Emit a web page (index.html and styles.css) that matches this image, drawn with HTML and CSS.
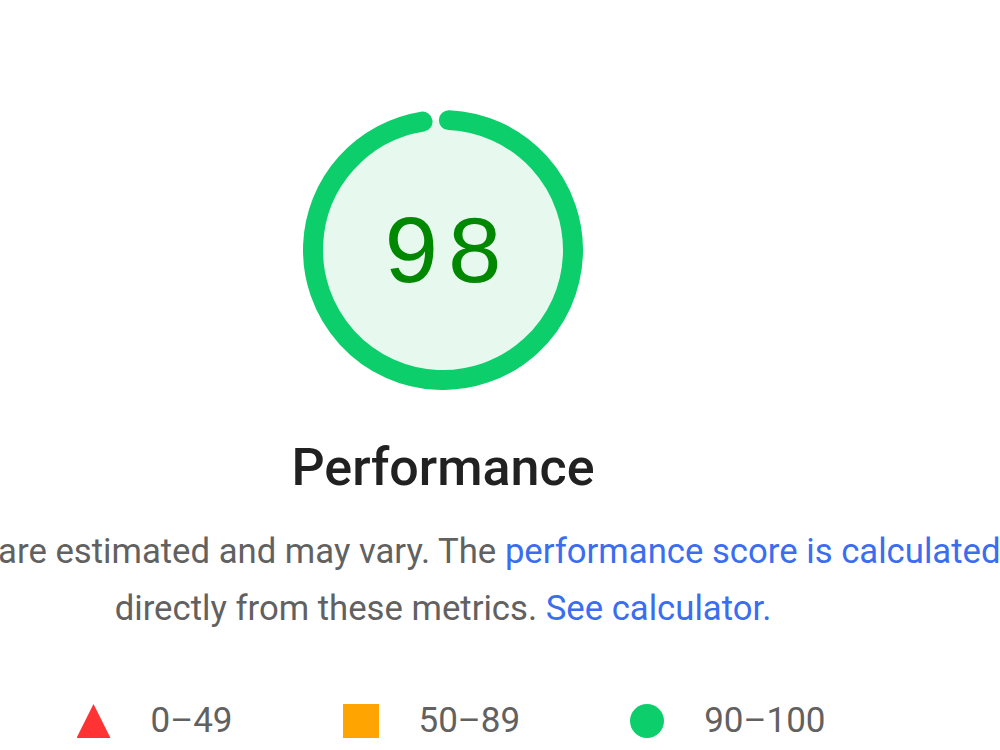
FILE: index.html
```html
<!DOCTYPE html>
<html lang="en">
<head>
    <meta charset="UTF-8">
    <meta name="viewport" content="width=device-width, initial-scale=1.0">
    <title>Lighthouse Report</title>
    <link rel="stylesheet" href="styles.css">
</head>
<body>
    <div class="category">
        <div class="gauge">
            <svg viewBox="0 0 280 280" class="gauge-svg">
                <circle class="gauge-base" cx="140" cy="140" r="130"></circle>
                <circle class="gauge-arc" cx="140" cy="140" r="130"
                        stroke-dasharray="790 817" transform="rotate(-87.4 140 140)"></circle>
            </svg>
            <div class="gauge-score">98</div>
        </div>
        <h2 class="category-title">Performance</h2>
        <p class="category-desc">Values are estimated and may vary. The <a href="#">performance score is calculated</a> directly from these metrics. <a href="#">See calculator.</a></p>
        <div class="scorescale">
            <span class="scale-item"><span class="shape fail"></span>0–49</span>
            <span class="scale-item"><span class="shape average"></span>50–89</span>
            <span class="scale-item"><span class="shape pass"></span>90–100</span>
        </div>
    </div>
</body>
</html>
```

FILE: styles.css
```css
body {
    margin: 0;
    padding: 0;
    background-color: #fff;
    font-family: Roboto, "Noto Sans", sans-serif;
    overflow: hidden;
}
.category {
    width: 1200px;
    margin-left: -157px;
    display: flex;
    flex-direction: column;
    align-items: center;
    padding-top: 110px;
}
.gauge {
    position: relative;
    width: 280px;
    height: 280px;
}
.gauge-svg {
    width: 280px;
    height: 280px;
    display: block;
}
.gauge-base {
    fill: #e7f9ef;
    stroke: none;
}
.gauge-arc {
    fill: none;
    stroke: #0cce6b;
    stroke-width: 20;
    stroke-linecap: round;
}
.gauge-score {
    position: absolute;
    inset: 0;
    display: flex;
    align-items: center;
    justify-content: center;
    padding: 12px 0 0 6px;
    font-family: "Liberation Mono", monospace;
    font-size: 96px;
    letter-spacing: 6px;
    color: #008800;
}
.category-title {
    margin: 48px 0 0;
    font-size: 52px;
    font-weight: 500;
    color: #212121;
    line-height: 60px;
}
.category-desc {
    width: 1180px;
    margin: 25px 0 0;
    text-align: center;
    font-size: 34.7px;
    line-height: 57px;
    color: #616161;
}
.category-desc a {
    color: #3b6df0;
    text-decoration: none;
}
.scorescale {
    display: flex;
    justify-content: center;
    gap: 110px;
    margin: 64px 0 0 16px;
    font-size: 35px;
    color: #616161;
    line-height: 40px;
}
.scale-item {
    display: flex;
    align-items: center;
    gap: 40px;
}
.shape {
    display: inline-block;
    width: 34px;
    height: 34px;
}
.shape.fail {
    background-color: #ff3333;
    clip-path: polygon(50% 0, 100% 100%, 0 100%);
}
.shape.average {
    background-color: #ffa400;
    width: 36px;
}
.shape.pass {
    background-color: #0cce6b;
    border-radius: 50%;
}
```
